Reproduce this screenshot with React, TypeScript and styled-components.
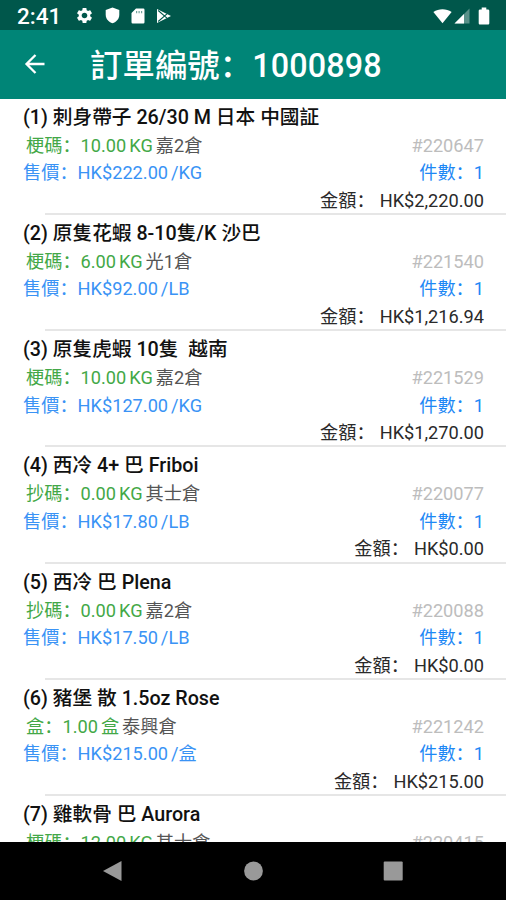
import React from "react";
import styled, { createGlobalStyle } from "styled-components";

interface OrderItem {
  name: string;
  label: string;
  qty: string;
  unit: string;
  warehouse: string;
  code: string;
  price: string;
  priceUnit: string;
  total: string;
}

const items: OrderItem[] = [
  { name: "刺身帶子 26/30 M 日本 中國証", label: "梗碼", qty: "10.00", unit: "KG", warehouse: "嘉2倉", code: "220647", price: "222.00", priceUnit: "KG", total: "2,220.00" },
  { name: "原隻花蝦 8-10隻/K 沙巴", label: "梗碼", qty: "6.00", unit: "KG", warehouse: "光1倉", code: "221540", price: "92.00", priceUnit: "LB", total: "1,216.94" },
  { name: "原隻虎蝦 10隻  越南", label: "梗碼", qty: "10.00", unit: "KG", warehouse: "嘉2倉", code: "221529", price: "127.00", priceUnit: "KG", total: "1,270.00" },
  { name: "西冷 4+ 巴 Friboi", label: "抄碼", qty: "0.00", unit: "KG", warehouse: "其士倉", code: "220077", price: "17.80", priceUnit: "LB", total: "0.00" },
  { name: "西冷 巴 Plena", label: "抄碼", qty: "0.00", unit: "KG", warehouse: "嘉2倉", code: "220088", price: "17.50", priceUnit: "LB", total: "0.00" },
  { name: "豬堡 散 1.5oz Rose", label: "盒", qty: "1.00", unit: "盒", warehouse: "泰興倉", code: "221242", price: "215.00", priceUnit: "盒", total: "215.00" },
];

// only the first lines of this one fit above the nav bar
const lastItem = { name: "雞軟骨 巴 Aurora", label: "梗碼", qty: "12.00", unit: "KG", warehouse: "其士倉", code: "220415" };

const App: React.FC = () => {
  return (
    <Screen>
      <GlobalStyle />
      <StatusBar>
        <Clock>2:41</Clock>
        <StatusIcons>
          <svg width="19" height="19" viewBox="0 0 24 24">
            <path d="M19.14 12.94c.04-.3.06-.61.06-.94 0-.32-.02-.64-.07-.94l2.03-1.58c.18-.14.23-.41.12-.61l-1.92-3.32c-.12-.22-.37-.29-.59-.22l-2.39.96c-.5-.38-1.03-.7-1.62-.94l-.36-2.54c-.04-.24-.24-.41-.48-.41h-3.84c-.24 0-.43.17-.47.41l-.36 2.54c-.59.24-1.13.57-1.62.94l-2.39-.96c-.22-.08-.47 0-.59.22L2.74 8.87c-.12.21-.08.47.12.61l2.03 1.58c-.05.3-.09.63-.09.94s.02.64.07.94l-2.03 1.58c-.18.14-.23.41-.12.61l1.92 3.32c.12.22.37.29.59.22l2.39-.96c.5.38 1.03.7 1.62.94l.36 2.54c.05.24.24.41.48.41h3.84c.24 0 .44-.17.47-.41l.36-2.54c.59-.24 1.13-.56 1.62-.94l2.39.96c.22.08.47 0 .59-.22l1.92-3.32c.12-.22.07-.47-.12-.61l-2.01-1.58zM12 15.6c-1.98 0-3.6-1.62-3.6-3.6s1.62-3.6 3.6-3.6 3.6 1.62 3.6 3.6-1.62 3.6-3.6 3.6z" />
          </svg>
          <svg width="15" height="17" viewBox="0 0 15 17">
            <path d="M7.5.5l6.8 2.6v4.7c0 4-2.8 7.3-6.8 8.4C3.5 15.1.7 11.8.7 7.8V3.1z" />
          </svg>
          <svg width="14" height="16" viewBox="0 0 14 16">
            <path d="M5 .5h7.3a1.2 1.2 0 0 1 1.2 1.2v12.6a1.2 1.2 0 0 1-1.2 1.2H1.7a1.2 1.2 0 0 1-1.2-1.2V5z" />
            <path d="M5 3.1h1.2v2.2H5zM7.500 3.1h1.2v2.200H7.500zM10 3.100h1.200v2.200H10z" fill="#00574b" opacity=".55" />
          </svg>
          <svg width="16" height="16" viewBox="0 0 16 16">
            <path d="M1 1l14 7-14 7z" />
            <path d="M2.2 2.5L11 10.2M2.2 13.5L11 5.8" fill="none" stroke="#00574b" strokeWidth="1.1" />
          </svg>
        </StatusIcons>
        <Signals>
          <svg width="19" height="16" viewBox="0 0 20 16">
            <path d="M.4 3.8C6 0 14 0 19.6 3.8L10 15.5z" />
          </svg>
          <svg width="16" height="16" viewBox="0 0 16 16">
            <path d="M15.5.5v15H.5z" opacity=".35" />
            <path d="M10 6v9.500H.5z" />
          </svg>
          <Battery width="12" height="18" viewBox="0 0 12 18">
            <path d="M3.7.5h4.600v2h1.700c.7 0 1.300.6 1.300 1.300v12.400c0 .7-.6 1.300-1.300 1.300H2c-.7 0-1.300-.6-1.300-1.300V3.8c0-.7.6-1.300 1.300-1.300h1.700z" />
          </Battery>
        </Signals>
      </StatusBar>
      <AppBar>
        <svg width="22" height="22" viewBox="0 0 22 22" fill="none" stroke="#fff" strokeWidth="2.3">
          <path d="M20.500 11H3M11.500 2L2.500 11l9 9" />
        </svg>
        <Title>訂單編號：1000898</Title>
      </AppBar>
      <List>
        {items.map((item, i) => (
          <Item key={item.code}>
            <Name>{`(${i + 1}) ${item.name}`}</Name>
            <Row $color="#43a847" $indent>
              <Group>
                <span>{item.label}：{item.qty}</span>
                <Unit>{item.unit}</Unit>
                <Warehouse>{item.warehouse}</Warehouse>
              </Group>
              <Code>#{item.code}</Code>
            </Row>
            <Row $color="#3a93f5">
              <Group>
                <span>售價：HK${item.price}</span>
                <Unit>/{item.priceUnit}</Unit>
              </Group>
              <Count>件數：1</Count>
            </Row>
            <Total>
              <span>金額：</span>
              <span>HK${item.total}</span>
            </Total>
            <Divider />
          </Item>
        ))}
        <Name>{`(${items.length + 1}) ${lastItem.name}`}</Name>
        <Row $color="#43a847" $indent>
          <Group>
            <span>{lastItem.label}：{lastItem.qty}</span>
            <Unit>{lastItem.unit}</Unit>
            <Warehouse>{lastItem.warehouse}</Warehouse>
          </Group>
          <Code>#{lastItem.code}</Code>
        </Row>
      </List>
      <NavBar>
        <svg width="20" height="22" viewBox="0 0 20 22">
          <path d="M19.500 1v20L1 11z" />
        </svg>
        <svg width="20" height="20" viewBox="0 0 20 20">
          <circle cx="10.500" cy="10" r="9.400" />
        </svg>
        <svg width="20" height="20" viewBox="0 0 20 20">
          <rect x=".7" y=".5" width="19" height="19" rx="1" />
        </svg>
      </NavBar>
    </Screen>
  );
};

const GlobalStyle = createGlobalStyle`
  body {
    margin: 0;
    background: #fff;
  }
  * {
    box-sizing: border-box;
  }
`;

const Screen = styled.div`
  display: flex;
  flex-direction: column;
  width: 506px;
  height: 900px;
  overflow: hidden;
  background: #fff;
  font-family: Roboto, "Noto Sans CJK SC", sans-serif;
  svg {
    flex: none;
  }
`;

const StatusBar = styled.div`
  display: flex;
  align-items: center;
  flex: none;
  height: 30px;
  padding: 0 16px 0 17px;
  background: #00574b;
  color: #fff;
  fill: #fff;
`;

const Clock = styled.div`
  width: 57.5px;
  padding-top: 2px;
  font-size: 22.5px;
  font-weight: 500;
  line-height: 30px;
`;

const StatusIcons = styled.div`
  display: flex;
  align-items: center;
  gap: 11px;
  padding-top: 1px;
`;

const Signals = styled.div`
  display: flex;
  align-items: center;
  gap: 2px;
  margin-left: auto;
  padding-top: 1px;
`;

const Battery = styled.svg`
  margin-left: 6px;
`;

const AppBar = styled.div`
  display: flex;
  align-items: center;
  flex: none;
  height: 68.5px;
  padding-left: 24px;
  background: #008577;
`;

const Title = styled.div`
  margin-left: 44px;
  padding-top: 4px;
  color: #fff;
  font-size: 32.3px;
  font-weight: 500;
  line-height: 44px;
  letter-spacing: 0.15px;
  white-space: nowrap;
`;

const List = styled.div`
  flex: 1;
  min-height: 0;
  overflow: hidden;
`;

const Item = styled.div`
  height: 116.25px;
`;

const Name = styled.div`
  height: 33px;
  padding: 2px 22px 0 23px;
  color: #111;
  font-size: 19.7px;
  font-weight: 500;
  line-height: 34px;
  white-space: pre;
`;

const Row = styled.div<{ $color: string; $indent?: boolean }>`
  display: flex;
  justify-content: space-between;
  height: 27.5px;
  padding: 0 22px 0 ${(p) => (p.$indent ? 26 : 23)}px;
  color: ${(p) => p.$color};
  font-size: 18.2px;
  line-height: 28px;
  white-space: nowrap;
`;

const Group = styled.div`
  display: flex;
`;

const Unit = styled.span`
  margin-left: 3px;
`;

const Warehouse = styled.span`
  margin-left: 3px;
  color: #555;
`;

const Code = styled.span`
  color: #bdbdbd;
`;

const Count = styled.span`
  color: #1e88f5;
`;

const Total = styled(Row).attrs({ $color: "#2a2a2a" })`
  justify-content: flex-end;
  gap: 5px;
  height: 26.25px;
`;

const Divider = styled.div`
  height: 2px;
  margin-left: 45px;
  background: #e6e6e6;
`;

const NavBar = styled.div`
  display: flex;
  align-items: center;
  justify-content: space-between;
  flex: none;
  height: 58px;
  padding: 0 103px 0 102px;
  background: #000;
  fill: #999;
`;

export default App;
